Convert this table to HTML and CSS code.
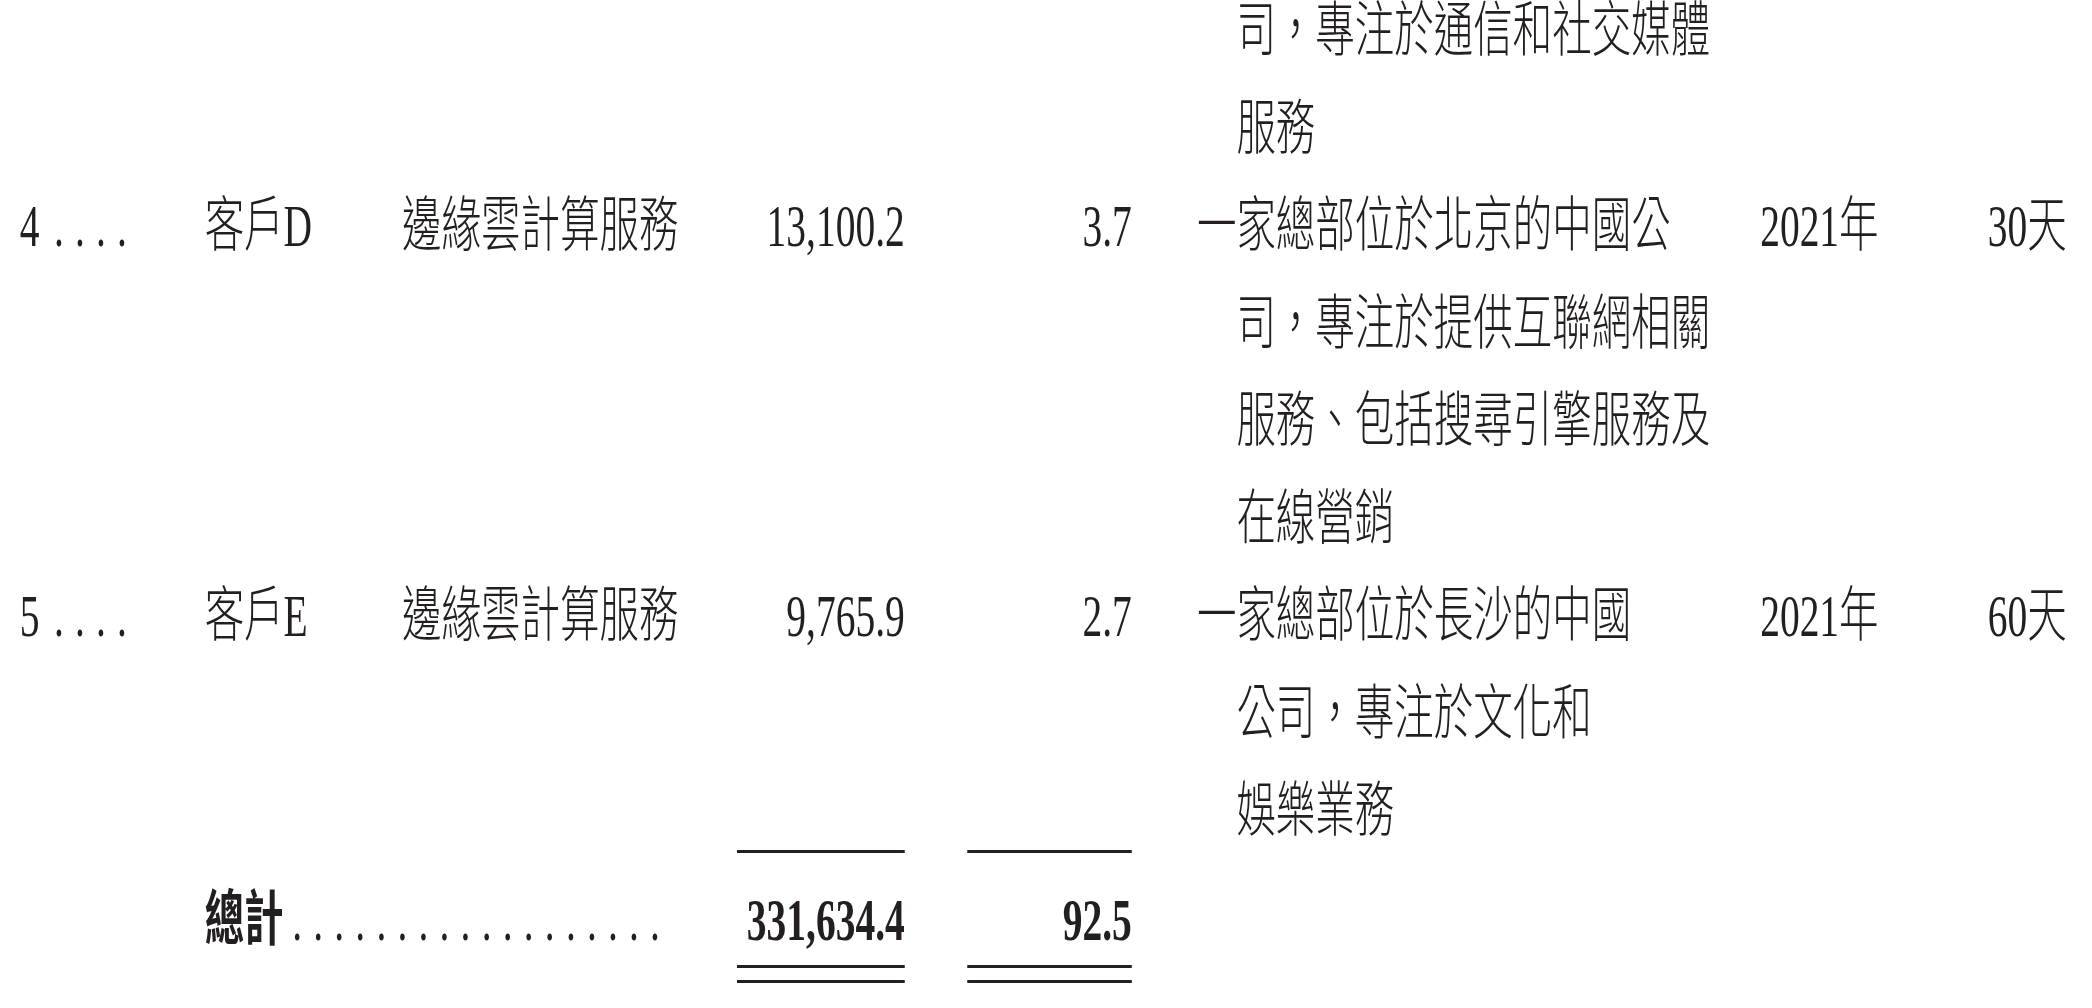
FILE: index.html
```html
<!DOCTYPE html>
<html lang="zh-Hant">
<head>
<meta charset="utf-8">
<title>客戶</title>
<link rel="stylesheet" href="styles.css">
</head>
<body>
<div class="frame">
<div class="sheet">
  <div class="row">
    <div class="c6 desc cont">司，專注於通信和社交媒體<br>服務</div>
  </div>
  <div class="row">
    <div class="c1">4<span class="dots">....</span></div>
    <div class="c2">客戶D</div>
    <div class="c3">邊緣雲計算服務</div>
    <div class="c4 num">13,100.2</div>
    <div class="c5 num">3.7</div>
    <div class="c6 desc">一家總部位於北京的中國公<br>司，專注於提供互聯網相關<br>服務、包括搜尋引擎服務及<br>在線營銷</div>
    <div class="c7">2021年</div>
    <div class="c8 num">30天</div>
  </div>
  <div class="row">
    <div class="c1">5<span class="dots">....</span></div>
    <div class="c2">客戶E</div>
    <div class="c3">邊緣雲計算服務</div>
    <div class="c4 num">9,765.9</div>
    <div class="c5 num">2.7</div>
    <div class="c6 desc">一家總部位於長沙的中國<br>公司，專注於文化和<br>娛樂業務</div>
    <div class="c7">2021年</div>
    <div class="c8 num">60天</div>
  </div>
  <div class="row rules rules-top">
    <div class="c4"><div class="rule"></div></div>
    <div class="c5"><div class="rule"></div></div>
  </div>
  <div class="row total">
    <div class="c2 total-label"><b>總計</b><span class="dots long">..................</span></div>
    <div class="c4 num"><b>331,634.4</b></div>
    <div class="c5 num"><b>92.5</b></div>
  </div>
  <div class="row rules">
    <div class="c4"><div class="double"></div></div>
    <div class="c5"><div class="double"></div></div>
  </div>
</div>
</div>
</body>
</html>
```
FILE: styles.css
```css
html, body {
  margin: 0;
  padding: 0;
  background: #ffffff;
  overflow: hidden;
}

.frame {
  width: 2092px;
  height: 1008px;
  overflow: hidden;
}

.sheet {
  width: 3150px;
  padding-left: 30px;
  margin-top: -17px;
  transform: scaleX(0.658);
  transform-origin: 0 0;
  font-family: "Liberation Serif", "Noto Sans CJK TC", serif;
  font-size: 60px;
  font-weight: 300;
  line-height: 97.5px;
  color: #231f20;
}

.row {
  display: grid;
  grid-template-columns: 281px 300px 509px 255px 345px 955px 300px 166px;
  align-items: baseline;
}

.c1 { grid-column: 1; }
.c2 { grid-column: 2; }
.c3 { grid-column: 3; }
.c4 { grid-column: 4; }
.c5 { grid-column: 5; padding-left: 95px; }
.c6 { grid-column: 6; padding-left: 99px; }
.c7 { grid-column: 7; }
.c8 { grid-column: 8; }

.num { text-align: right; }

.desc {
  padding-left: calc(99px + 1em);
  text-indent: -1em;
}
.desc.cont { text-indent: 0; }

.dots {
  letter-spacing: 17px;
  margin-left: 22px;
}
.dots.long { margin-left: 13px; }

.total-label { white-space: nowrap; }

b { font-weight: 700; }

.rules { align-items: start; }
.rules-top { margin-top: -10.5px; }

.rule {
  height: 3px;
  background: #231f20;
}

.double {
  height: 12px;
  border-top: 3px solid #231f20;
  border-bottom: 3px solid #231f20;
}

.total {
  padding-top: 19px;
  height: 93px;
}
```
